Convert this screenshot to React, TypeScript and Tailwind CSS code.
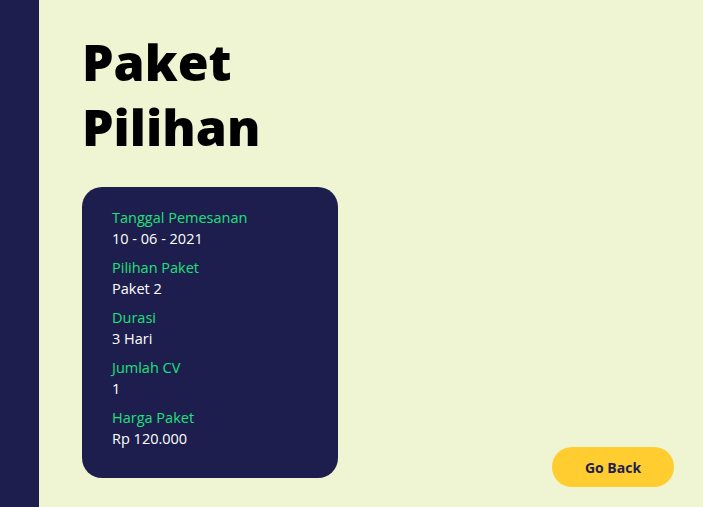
const details = [
  { label: "Tanggal Pemesanan", value: "10 - 06 - 2021" },
  { label: "Pilihan Paket", value: "Paket 2" },
  { label: "Durasi", value: "3 Hari" },
  { label: "Jumlah CV", value: "1" },
  { label: "Harga Paket", value: "Rp 120.000" },
];

export default function App() {
  return (
    <div className="flex h-[507px] w-full bg-[#eff4d3] font-['Open_Sans',sans-serif]">
      <aside className="w-[39px] shrink-0 bg-[#1e1e4e]" />
      <main className="flex flex-1 flex-col pl-[43px] pr-[29px] pt-[30px] pb-[20px]">
        <h1 className="text-[50px] font-extrabold leading-[65px] text-black">
          Paket
          <br />
          Pilihan
        </h1>
        <div className="mt-[27px] flex items-end justify-between">
          <div className="mb-[9px] flex h-[291px] w-[256px] flex-col gap-[8px] rounded-[20px] bg-[#1e1e4e] px-[30px] pt-[20px]">
            {details.map((item) => (
              <div key={item.label} className="text-[14.5px] leading-[21px]">
                <p className="text-[#1ee07a]">{item.label}</p>
                <p className="text-white">{item.value}</p>
              </div>
            ))}
          </div>
          <button className="h-[40px] w-[122px] rounded-full bg-[#ffcd2f] text-[14px] font-bold text-[#1e1e4e]">
            Go Back
          </button>
        </div>
      </main>
    </div>
  );
}
